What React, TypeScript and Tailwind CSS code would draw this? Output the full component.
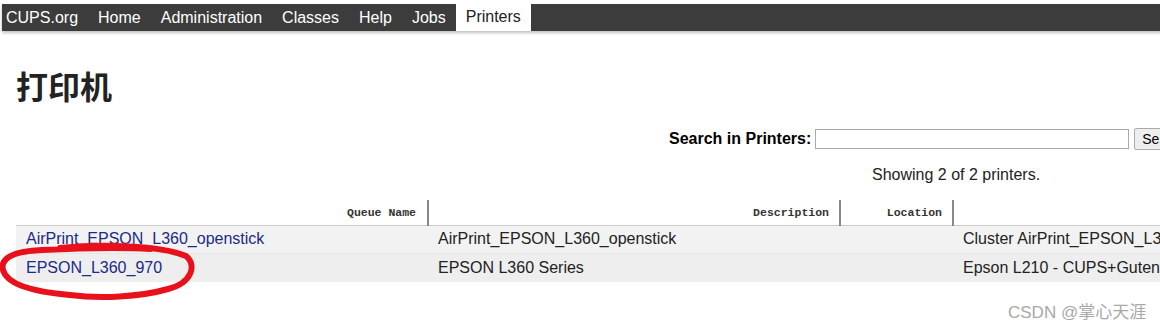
import React from 'react';

const NAV_ITEMS = ['CUPS.org', 'Home', 'Administration', 'Classes', 'Help', 'Jobs', 'Printers'];

interface PrinterRow {
  name: string;
  description: string;
  location: string;
  model: string;
}

const PRINTERS: PrinterRow[] = [
  {
    name: 'AirPrint_EPSON_L360_openstick',
    description: 'AirPrint_EPSON_L360_openstick',
    location: '',
    model: 'Cluster AirPrint_EPSON_L360_openstick',
  },
  {
    name: 'EPSON_L360_970',
    description: 'EPSON L360 Series',
    location: '',
    model: 'Epson L210 - CUPS+Gutenprint v5.3.3',
  },
];

const App: React.FC = () => {
  return (
    <div className="relative w-[1160px] h-[332px] overflow-hidden bg-white text-[16px] text-[#222] font-['Liberation_Sans',Arial,sans-serif]">
      {/* Top nav */}
      <nav className="ml-[2px] mt-[4px] h-[27px] w-[1300px] bg-[#3c3c3c] flex shadow-[0_2px_3px_rgba(0,0,0,0.25)]">
        {NAV_ITEMS.map((item, i) => {
          const active = item === 'Printers';
          return (
            <span
              key={item}
              className={`flex items-center leading-none ${i === 0 ? 'pl-[4px] pr-[10px]' : 'px-[10px]'} ${
                active ? 'bg-white text-[#222] -mt-[1px] px-[9px]' : 'text-white'
              }`}
            >
              {item}
            </span>
          );
        })}
      </nav>

      <div className="pl-4 w-[1300px]">
        <h1 className="mt-[38px] text-[32px] leading-none font-bold font-['Noto_Sans_CJK_SC','Liberation_Sans',sans-serif]">
          打印机
        </h1>

        {/* Search */}
        <form className="mt-[28px] ml-[653px] flex items-center gap-[4px] h-[20px]">
          <label className="font-bold text-black">Search in Printers:</label>
          <input className="w-[314px] h-[20px] border border-[#aaa] bg-white" />
          <button
            type="button"
            className="ml-[1px] h-[22px] px-[7px] border border-[#aaa] rounded-[2px] bg-[#eee] text-[14px] text-black"
          >
            Search
          </button>
        </form>

        <p className="mt-[18px] ml-[856px] leading-none text-[#222]">Showing 2 of 2 printers.</p>

        {/* Table */}
        <table className="mt-[17px] border-collapse w-[1260px] table-fixed">
          <thead>
            <tr className="h-[25px] border-b border-[#ccc] font-['Liberation_Mono',monospace] text-[11.5px] font-bold text-[#333]">
              <th className="w-[412px] text-right pr-[11px] border-r-2 border-[#888]">Queue Name</th>
              <th className="w-[412px] text-right pr-[10px] border-r-2 border-[#888]">Description</th>
              <th className="w-[113px] text-right pr-[10px] border-r-2 border-[#888]">Location</th>
              <th className="text-right pr-[10px]">Make and Model</th>
            </tr>
          </thead>
          <tbody>
            {PRINTERS.map((p, i) => (
              <tr
                key={p.name}
                className={`${i === 0 ? 'h-[28px] bg-[#f2f2f2] border-b border-[#e6e6e6]' : 'h-[29px] bg-[#eeeeee]'}`}
              >
                <td className="pl-[10px] whitespace-nowrap">
                  <a className="text-[#1b2a8a]">{p.name}</a>
                </td>
                <td className="pl-[10px] whitespace-nowrap">{p.description}</td>
                <td className="pl-[10px] whitespace-nowrap">{p.location}</td>
                <td className="pl-[10px] whitespace-nowrap overflow-hidden">{p.model}</td>
              </tr>
            ))}
          </tbody>
        </table>
      </div>

      {/* Hand-drawn red marker round the second printer */}
      <svg className="absolute left-0 top-[240px]" width="200" height="62" viewBox="0 0 200 62">
        <path
          d="M60 8 C 100 4, 160 5, 186 16 C 197 25, 192 43, 168 49 C 140 57, 100 59, 70 55 C 35 52, 7 45, 3 30 C 0 18, 14 11, 42 10 C 80 8, 120 7, 150 9"
          fill="none"
          stroke="#e8101a"
          strokeWidth="6"
          strokeLinecap="round"
        />
      </svg>

      {/* Watermark */}
      <div className="absolute left-[1008px] top-[304px] text-[17px] leading-none text-[#a8a8a8] font-['Liberation_Sans','Noto_Sans_CJK_SC',sans-serif]">
        CSDN @掌心天涯
      </div>
    </div>
  );
};

export default App;
